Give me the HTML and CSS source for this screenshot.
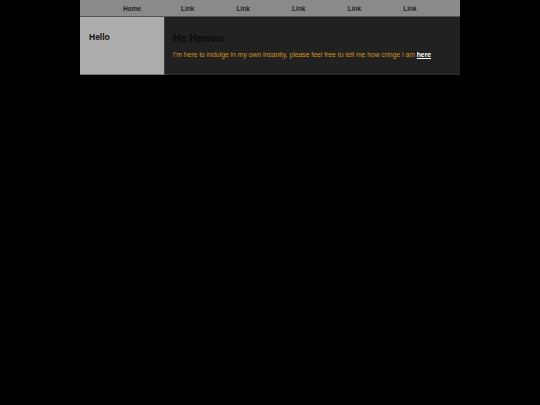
FILE: index.html
```html
<!DOCTYPE html>
<html>
<head>
<meta charset="utf-8">
<link rel="stylesheet" href="styles.css">
</head>
<body>
<div class="page">
  <nav class="nav">
    <a class="nav-link" href="#">Home</a>
    <a class="nav-link" href="#">Link</a>
    <a class="nav-link" href="#">Link</a>
    <a class="nav-link" href="#">Link</a>
    <a class="nav-link" href="#">Link</a>
    <a class="nav-link" href="#">Link</a>
  </nav>
  <div class="row">
    <aside class="side">
      <h3 class="side-title">Hello</h3>
    </aside>
    <main class="main">
      <h2 class="main-title">He Hewwo</h2>
      <p class="main-text">I'm here to indulge in my own insanity, please feel free to tell me how cringe i am <a class="here" href="#">here</a></p>
    </main>
  </div>
</div>
</body>
</html>
```
FILE: styles.css
```css
html, body {
  margin: 0;
  padding: 0;
  background: #000;
  font-family: "Liberation Sans", Arial, sans-serif;
}
.page {
  width: 380px;
  margin: 0 auto;
}
.nav {
  height: 16px;
  background: #8a8a8a;
  border-bottom: 1px solid #555;
  display: flex;
  justify-content: center;
  align-items: center;
  padding-left: 2px;
}
.nav-link {
  width: 55.6px;
  text-align: center;
  font-size: 6.5px;
  font-weight: bold;
  color: #222;
  text-decoration: none;
}
.row {
  display: flex;
  height: 58px;
}
.side {
  width: 85px;
  background: #acacac;
  border-right: 1px solid #3a3a3a;
  border-bottom: 1px solid #777;
  padding: 15px 0 0 9px;
  box-sizing: border-box;
}
.side-title {
  margin: 0;
  font-size: 8.5px;
  font-weight: bold;
  color: #111;
}
.main {
  flex: 1;
  background: #212121;
  border-bottom: 1px solid #2c2c2c;
  padding: 16px 0 0 8px;
  box-sizing: border-box;
}
.main-title {
  margin: 0;
  font-size: 10.4px;
  font-weight: bold;
  color: #0c0c0c;
}
.main-text {
  margin: 7px 0 0 0;
  font-size: 6.8px;
  color: #d4921c;
}
.here {
  color: #fff;
  font-weight: bold;
  text-decoration: underline;
}
```
